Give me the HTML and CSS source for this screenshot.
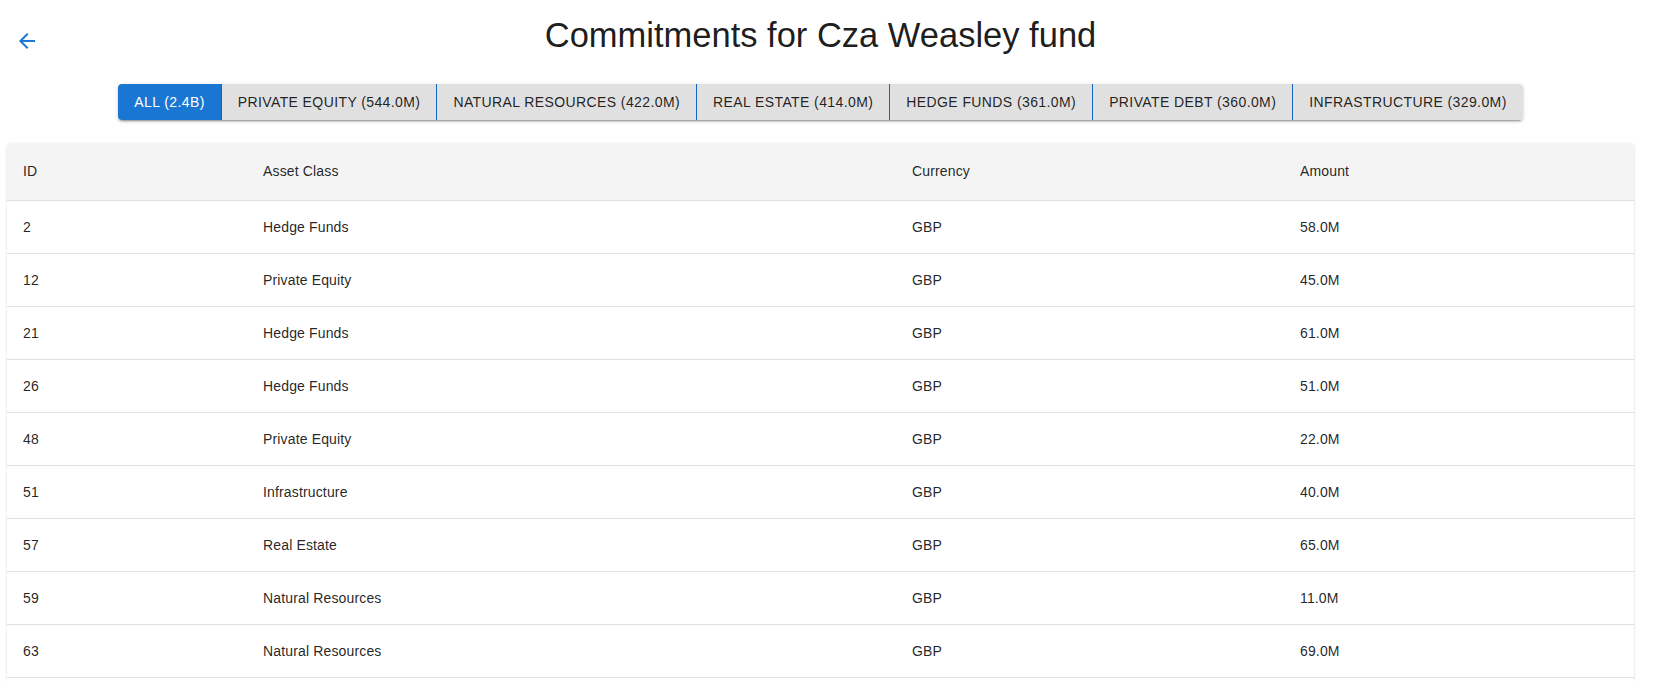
FILE: index.html
```html
<!DOCTYPE html>
<html lang="en">
<head>
<meta charset="utf-8">
<title>Commitments for Cza Weasley fund</title>
<link rel="stylesheet" href="styles.css">
</head>
<body>
<div class="page">
  <header class="header">
    <button class="icon-btn" aria-label="Back">
      <svg viewBox="0 0 24 24" width="24" height="24"><path d="M20 11H7.83l5.59-5.59L12 4l-8 8 8 8 1.41-1.41L7.83 13H20v-2z" fill="currentColor"/></svg>
    </button>
    <h1 class="title">Commitments for Cza Weasley fund</h1>
    <div></div>
  </header>

  <div class="filters">
    <div class="btn-group">
      <button class="btn active">All (2.4B)</button>
      <button class="btn">Private Equity (544.0M)</button>
      <button class="btn">Natural Resources (422.0M)</button>
      <button class="btn">Real Estate (414.0M)</button>
      <button class="btn">Hedge Funds (361.0M)</button>
      <button class="btn">Private Debt (360.0M)</button>
      <button class="btn">Infrastructure (329.0M)</button>
    </div>
  </div>

  <div class="paper">
    <table class="table">
      <colgroup>
        <col class="c-id"><col class="c-asset"><col class="c-cur"><col>
      </colgroup>
      <thead>
        <tr><th>ID</th><th>Asset Class</th><th>Currency</th><th>Amount</th></tr>
      </thead>
      <tbody>
        <tr><td>2</td><td>Hedge Funds</td><td>GBP</td><td>58.0M</td></tr>
        <tr><td>12</td><td>Private Equity</td><td>GBP</td><td>45.0M</td></tr>
        <tr><td>21</td><td>Hedge Funds</td><td>GBP</td><td>61.0M</td></tr>
        <tr><td>26</td><td>Hedge Funds</td><td>GBP</td><td>51.0M</td></tr>
        <tr><td>48</td><td>Private Equity</td><td>GBP</td><td>22.0M</td></tr>
        <tr><td>51</td><td>Infrastructure</td><td>GBP</td><td>40.0M</td></tr>
        <tr><td>57</td><td>Real Estate</td><td>GBP</td><td>65.0M</td></tr>
        <tr><td>59</td><td>Natural Resources</td><td>GBP</td><td>11.0M</td></tr>
        <tr><td>63</td><td>Natural Resources</td><td>GBP</td><td>69.0M</td></tr>
        <tr><td>70</td><td>Private Debt</td><td>GBP</td><td>34.0M</td></tr>
        <tr><td>74</td><td>Infrastructure</td><td>GBP</td><td>27.0M</td></tr>
      </tbody>
    </table>
  </div>
</div>
</body>
</html>
```

FILE: styles.css
```css
* { box-sizing: border-box; }

html, body {
  margin: 0;
  padding: 0;
  background: #fff;
  font-family: "Liberation Sans", Arial, Helvetica, sans-serif;
  color: rgba(0, 0, 0, 0.87);
}

.page {
  display: flex;
  flex-direction: column;
  gap: 23px;
  padding: 14px 21px 0 7px;
}

.header {
  display: grid;
  grid-template-columns: 1fr auto 1fr;
  align-items: start;
}

.icon-btn {
  justify-self: start;
  margin-top: 7px;
  width: 40px;
  height: 40px;
  padding: 8px;
  border: 0;
  border-radius: 50%;
  background: transparent;
  color: #1976d2;
  display: flex;
  align-items: center;
  justify-content: center;
  cursor: pointer;
}

.icon-btn svg { display: block; }

.title {
  margin: 0;
  font-size: 34.5px;
  font-weight: 400;
  line-height: 42px;
  color: rgba(0, 0, 0, 0.9);
  white-space: nowrap;
}

.filters {
  display: flex;
  justify-content: center;
}

.btn-group {
  display: inline-flex;
  border-radius: 4px;
  box-shadow: 0px 3px 1px -2px rgba(0,0,0,0.2), 0px 2px 2px 0px rgba(0,0,0,0.14), 0px 1px 5px 0px rgba(0,0,0,0.12);
}

.btn {
  font-family: "Liberation Sans", Arial, Helvetica, sans-serif;
  font-size: 14px;
  font-weight: 400;
  line-height: 24px;
  letter-spacing: 0.4px;
  text-transform: uppercase;
  padding: 6px 16px;
  border: 0;
  border-right: 1px solid #1565c0;
  background: #e0e0e0;
  color: rgba(0, 0, 0, 0.87);
  white-space: nowrap;
  cursor: pointer;
}

.btn:first-child { border-radius: 4px 0 0 4px; }
.btn:last-child { border-right: 0; border-radius: 0 4px 4px 0; }

.btn.active {
  background: #1976d2;
  color: #fff;
}

.paper {
  background: #fff;
  border-radius: 4px;
  overflow: hidden;
  box-shadow: 0px 2px 1px -1px rgba(0,0,0,0.2), 0px 1px 1px 0px rgba(0,0,0,0.14), 0px 1px 3px 0px rgba(0,0,0,0.12);
}

.table {
  width: 100%;
  border-collapse: collapse;
  table-layout: fixed;
}

.c-id { width: 240px; }
.c-asset { width: 649px; }
.c-cur { width: 388px; }

.table th,
.table td {
  text-align: left;
  padding: 16px;
  font-size: 14px;
  letter-spacing: 0.15px;
  border-bottom: 1px solid #e0e0e0;
  color: rgba(0, 0, 0, 0.87);
}

.table th {
  font-weight: 400;
  line-height: 25px;
  background: #f4f4f4;
}

.table td {
  line-height: 20px;
}
```
